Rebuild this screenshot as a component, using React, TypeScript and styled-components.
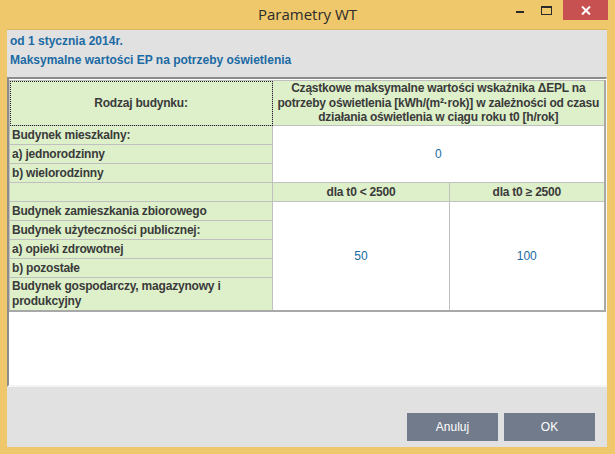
import React from "react";
import styled, { createGlobalStyle } from "styled-components";

const GlobalStyle = createGlobalStyle`
  html, body {
    margin: 0;
    padding: 0;
    background: #f0c86c;
  }
  body {
    font-family: "Liberation Sans", Arial, sans-serif;
  }
`;

export default function App() {
  return (
    <>
      <GlobalStyle />
      <Frame>
        <TitleBar>
          <span />
          <Title>Parametry WT</Title>
          <Controls>
            <CtrlButton aria-label="minimize">
              <svg width="10" height="10" viewBox="0 0 10 10">
                <rect x="1" y="6" width="8" height="2" fill="#2a2a2a" />
              </svg>
            </CtrlButton>
            <CtrlButton aria-label="maximize">
              <svg width="11" height="9" viewBox="0 0 11 9">
                <rect x="0.5" y="0.5" width="10" height="8" fill="none" stroke="#2a2a2a" />
                <rect x="0" y="0" width="11" height="2" fill="#2a2a2a" />
              </svg>
            </CtrlButton>
            <CloseButton aria-label="close">
              <svg width="10" height="9" viewBox="0 0 10 9">
                <path d="M1 0.5 L9 8.5 M9 0.5 L1 8.5" stroke="#fff" strokeWidth="2" />
              </svg>
            </CloseButton>
          </Controls>
        </TitleBar>

        <Content>
          <Heading>od 1 stycznia 2014r.</Heading>
          <Heading>Maksymalne wartości EP na potrzeby oświetlenia</Heading>

          <Panel>
            <Table>
              <colgroup>
                <col style={{ width: 263 }} />
                <col style={{ width: 177 }} />
                <col style={{ width: 155 }} />
              </colgroup>
              <tbody>
                <tr>
                  <HeadCell $focused>Rodzaj budynku:</HeadCell>
                  <HeadCell colSpan={2}>
                    Cząstkowe maksymalne wartości wskaźnika ΔEPL na potrzeby oświetlenia
                    [kWh/(m²·rok)] w zależności od czasu działania oświetlenia w ciągu roku t0
                    [h/rok]
                  </HeadCell>
                </tr>
                <Row>
                  <LabelCell>Budynek mieszkalny:</LabelCell>
                  <ValueCell colSpan={2} rowSpan={3}>
                    0
                  </ValueCell>
                </Row>
                <Row>
                  <LabelCell>a) jednorodzinny</LabelCell>
                </Row>
                <Row>
                  <LabelCell>b) wielorodzinny</LabelCell>
                </Row>
                <Row>
                  <LabelCell />
                  <HeadCell>dla t0 &lt; 2500</HeadCell>
                  <HeadCell>dla t0 ≥ 2500</HeadCell>
                </Row>
                <Row>
                  <LabelCell>Budynek zamieszkania zbiorowego</LabelCell>
                  <ValueCell rowSpan={5}>50</ValueCell>
                  <ValueCell rowSpan={5}>100</ValueCell>
                </Row>
                <Row>
                  <LabelCell>Budynek użyteczności publicznej:</LabelCell>
                </Row>
                <Row>
                  <LabelCell>a) opieki zdrowotnej</LabelCell>
                </Row>
                <Row>
                  <LabelCell>b) pozostałe</LabelCell>
                </Row>
                <tr>
                  <LabelCell $wrap>Budynek gospodarczy, magazynowy i produkcyjny</LabelCell>
                </tr>
              </tbody>
            </Table>
          </Panel>

          <Footer>
            <DialogButton>Anuluj</DialogButton>
            <DialogButton>OK</DialogButton>
          </Footer>
        </Content>
      </Frame>
    </>
  );
}

const Frame = styled.div`
  width: 615px;
  height: 454px;
  box-sizing: border-box;
  padding: 0 8px 7px 7px;
  background: #f0c86c;
  display: flex;
  flex-direction: column;
`;

const TitleBar = styled.div`
  height: 29px;
  display: grid;
  grid-template-columns: 1fr auto 1fr;
  align-items: start;
  margin-right: -1px;
`;

const Title = styled.div`
  font-family: "Open Sans", "Noto Sans", sans-serif;
  font-size: 15px;
  color: #2b2b2b;
  line-height: 29px;
`;

const Controls = styled.div`
  justify-self: end;
  display: flex;
  align-items: flex-start;
`;

const CtrlButton = styled.div`
  width: 26px;
  height: 20px;
  display: flex;
  align-items: center;
  justify-content: center;
`;

const CloseButton = styled(CtrlButton)`
  width: 45px;
  margin-left: 4px;
  background: #c75050;
`;

const Content = styled.div`
  flex: 1;
  display: flex;
  flex-direction: column;
  background: #e1e1e1;
  border-top: 1px solid #d8b860;
  padding-top: 2px;
`;

const Heading = styled.div`
  font-size: 12px;
  font-weight: bold;
  color: #1b6aa3;
  line-height: 19px;
  padding-left: 3px;
`;

const Panel = styled.div`
  margin-top: 7px;
  height: 310px;
  box-sizing: border-box;
  background: #fff;
  border-top: 2px solid #8c8c8c;
  border-left: 2px solid #8c8c8c;
  border-right: 1px solid #f4f4f4;
  border-bottom: 2px solid #f4f4f4;
  padding-top: 1px;
`;

const Table = styled.table`
  width: 595px;
  table-layout: fixed;
  border-collapse: collapse;
  font-size: 12px;
  border-bottom: 2px solid #a8a8a8;
  border-right: 2px solid #a8a8a8;
`;

const Row = styled.tr`
  height: 19px;
`;

const HeadCell = styled.td<{ $focused?: boolean }>`
  background: #ddf0ca;
  border: 1px solid #c0c0c0;
  font-weight: bold;
  color: #3a3a3a;
  text-align: center;
  line-height: 14.6px;
  letter-spacing: -0.22px;
  padding: 0;
  height: ${(p) => (p.$focused ? "44px" : "auto")};
  outline: ${(p) => (p.$focused ? "1px dotted #222" : "none")};
  outline-offset: -1px;
`;

const LabelCell = styled.td<{ $wrap?: boolean }>`
  background: #ddf0ca;
  border: 1px solid #c0c0c0;
  font-weight: bold;
  color: #3a3a3a;
  letter-spacing: -0.2px;
  line-height: ${(p) => (p.$wrap ? "15px" : "17px")};
  padding: ${(p) => (p.$wrap ? "1px 2px 1px" : "0 2px")};
  white-space: ${(p) => (p.$wrap ? "normal" : "nowrap")};
  vertical-align: middle;
`;

const ValueCell = styled.td`
  background: #fff;
  border: 1px solid #c0c0c0;
  color: #1b6aa3;
  text-align: center;
  vertical-align: middle;
`;

const Footer = styled.div`
  flex: 1;
  display: flex;
  justify-content: flex-end;
  align-items: flex-start;
  gap: 6px;
  padding: 26px 12px 0 0;
`;

const DialogButton = styled.button`
  width: 91px;
  height: 28px;
  border: none;
  background: #717b8b;
  color: #fff;
  font-family: "Liberation Sans", Arial, sans-serif;
  font-size: 12px;
  cursor: pointer;
`;
